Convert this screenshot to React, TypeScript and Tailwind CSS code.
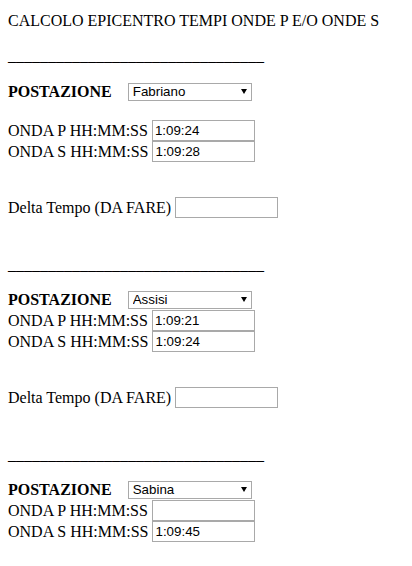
import React from 'react';

type Station = {
  name: string;
  p: string;
  s: string;
  delta?: boolean;
};

const stations: Station[] = [
  { name: 'Fabriano', p: '1:09:24', s: '1:09:28', delta: true },
  { name: 'Assisi', p: '1:09:21', s: '1:09:24', delta: true },
  { name: 'Sabina', p: '', s: '1:09:45' },
];

const inputCls =
  "w-[103px] h-[21px] ml-1 border border-[#a9a9a9] bg-white px-[2px] font-['Liberation_Sans',Arial,sans-serif] text-[13.33px] text-black outline-none";

const Rule = () => (
  <div className="h-[21px] leading-[21px] whitespace-pre">{'________________________________'}</div>
);

const Section: React.FC<{ st: Station; first?: boolean }> = ({ st, first }) => (
  <div>
    <Rule />
    <div className={`flex items-center h-[21px] ${first ? 'mt-[15px]' : 'mt-[14px]'}`}>
      <span className="font-bold leading-[21px]">POSTAZIONE</span>
      <div className="relative ml-[16px]">
        <select
          defaultValue={st.name}
          className="block w-[124px] h-[18px] appearance-none border border-[#a9a9a9] bg-white pl-[4px] font-['Liberation_Sans',Arial,sans-serif] text-[13.33px] leading-[16px] text-black outline-none"
        >
          <option>Fabriano</option>
          <option>Assisi</option>
          <option>Sabina</option>
        </select>
        <svg
          className="absolute right-[5px] top-[6px] pointer-events-none"
          width="6"
          height="5"
          viewBox="0 0 6 5"
        >
          <polygon points="0,0 6,0 3,5" fill="#000" />
        </svg>
      </div>
    </div>
    <div className={first ? 'mt-[18px]' : ''}>
      <div className="flex items-center h-[21px]">
        <span className="leading-[21px]">ONDA P HH:MM:SS</span>
        <input className={inputCls} defaultValue={st.p} />
      </div>
      <div className="flex items-center h-[21px]">
        <span className="leading-[21px]">ONDA S HH:MM:SS</span>
        <input className={inputCls} defaultValue={st.s} />
      </div>
    </div>
    {st.delta && (
      <div className="flex items-center h-[21px] mt-[35px] mb-[36px]">
        <span className="leading-[21px]">Delta Tempo (DA FARE)</span>
        <input className={inputCls + ' h-[20px]'} defaultValue="" />
      </div>
    )}
  </div>
);

export default function App() {
  return (
    <div className="min-h-[566px] bg-white px-[8px] pt-[10px] font-['Liberation_Serif','Times_New_Roman',serif] text-[16px] text-black">
      <div className="h-[21px] leading-[21px]">CALCOLO EPICENTRO TEMPI ONDE P E/O ONDE S</div>
      <div className="mt-[14px]">
        {stations.map((st, i) => (
          <Section key={st.name} st={st} first={i === 0} />
        ))}
      </div>
    </div>
  );
}
